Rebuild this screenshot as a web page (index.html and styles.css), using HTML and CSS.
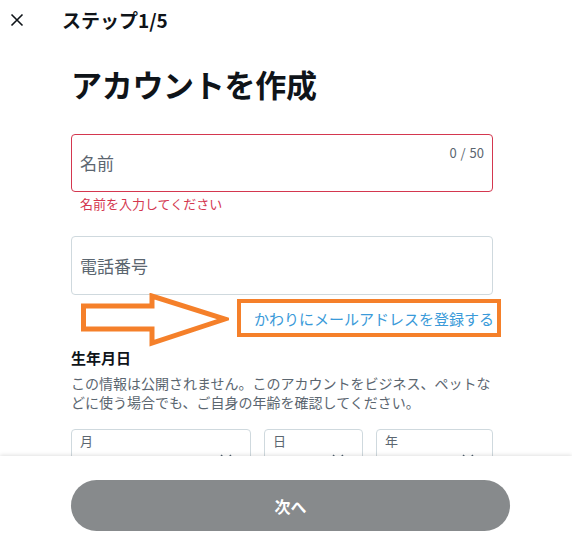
FILE: index.html
```html
<!DOCTYPE html>
<html lang="ja">
<head>
    <meta charset="utf-8">
    <title>アカウントを作成</title>
    <link rel="stylesheet" href="styles.css">
</head>
<body>
    <div class="page">
        <main class="main">
            <header class="topbar">
                <svg class="close-icon" width="14" height="14" viewBox="0 0 14 14">
                    <path d="M1.5 1.5 L12.5 12.5 M12.5 1.5 L1.5 12.5" stroke="#0f1419" stroke-width="1.6" fill="none"/>
                </svg>
                <span class="step">ステップ1/5</span>
            </header>

            <div class="content">
                <h1 class="title">アカウントを作成</h1>

                <div class="field field-error">
                    <span class="placeholder">名前</span>
                    <span class="counter">0 / 50</span>
                </div>
                <div class="error-text">名前を入力してください</div>

                <div class="field field-phone">
                    <span class="placeholder">電話番号</span>
                </div>

                <div class="link-row">
                    <svg class="arrow" width="148" height="54" viewBox="0 0 148 54">
                        <polygon points="2.5,13 71,13 71,3 144,26 71,50 71,36 2.5,36" fill="none" stroke="#f5802a" stroke-width="5" stroke-linejoin="miter"/>
                    </svg>
                    <div class="link-box">
                        <a class="alt-link" href="#">かわりにメールアドレスを登録する</a>
                    </div>
                </div>

                <h2 class="dob-title">生年月日</h2>
                <p class="dob-text">この情報は公開されません。このアカウントをビジネス、ペットなどに使う場合でも、ご自身の年齢を確認してください。</p>

                <div class="dob-row">
                    <div class="select select-month">
                        <span class="select-label">月</span>
                        <svg class="chevron" width="12" height="12" viewBox="0 0 12 12"><path d="M1 3 L6 8 L11 3" stroke="#536471" stroke-width="1.4" fill="none"/></svg>
                    </div>
                    <div class="select select-day">
                        <span class="select-label">日</span>
                        <svg class="chevron" width="12" height="12" viewBox="0 0 12 12"><path d="M1 3 L6 8 L11 3" stroke="#536471" stroke-width="1.4" fill="none"/></svg>
                    </div>
                    <div class="select select-year">
                        <span class="select-label">年</span>
                        <svg class="chevron" width="12" height="12" viewBox="0 0 12 12"><path d="M1 3 L6 8 L11 3" stroke="#536471" stroke-width="1.4" fill="none"/></svg>
                    </div>
                </div>
            </div>
        </main>

        <footer class="footer">
            <button class="next-btn" type="button">次へ</button>
        </footer>
    </div>
</body>
</html>
```

FILE: styles.css
```css
body { margin: 0; font-family: "Noto Sans CJK JP", "Noto Sans", sans-serif; background: #fff; color: #0f1419; }
.page { width: 572px; height: 542px; display: flex; flex-direction: column; overflow: hidden; }
.main { height: 456px; overflow: hidden; flex-shrink: 0; }

.topbar { height: 40px; display: flex; align-items: center; }
.close-icon { margin-left: 10px; margin-top: -1px; }
.step { margin-left: 38px; font-size: 19px; font-weight: 700; line-height: 24px; }

.content { padding-left: 71px; width: 422px; }
.title { margin: 24px 0 0; font-size: 31px; line-height: 40px; font-weight: 700; letter-spacing: -0.3px; }

.field { box-sizing: border-box; height: 58px; border: 1px solid #cfd9de; border-radius: 4px; display: flex; align-items: center; justify-content: space-between; padding: 0 8px; }
.field-error { margin-top: 30px; border-color: #d4374f; }
.field-phone { margin-top: 24px; height: 59px; }
.placeholder { font-size: 17px; color: #5b6670; line-height: 22px; }
.counter { align-self: flex-start; margin-top: 10px; font-size: 13px; color: #5b6670; line-height: 16px; word-spacing: 1px; }
.error-text { margin: 4px 0 0 9px; font-size: 13px; line-height: 16px; color: #d4374f; }

.link-row { display: flex; align-items: flex-start; height: 50px; }
.arrow { margin-left: 10px; margin-top: -2px; flex-shrink: 0; }
.link-box { box-sizing: border-box; flex-shrink: 0; margin-left: 8px; margin-top: 4px; width: 264px; height: 38px; border: 4px solid #f5802a; display: flex; align-items: center; padding-left: 13px; }
.alt-link { font-size: 15px; color: #3a9ad9; text-decoration: none; white-space: nowrap; }

.dob-title { margin: 3px 0 0; font-size: 15px; line-height: 20px; font-weight: 700; }
.dob-text { margin: 6px 0 0; font-size: 14px; line-height: 19px; color: #5b6670; }

.dob-row { display: flex; gap: 13px; margin-top: 17px; }
.select { box-sizing: border-box; height: 58px; border: 1px solid #cfd9de; border-radius: 4px; display: flex; justify-content: space-between; padding: 0 18px 0 8px; }
.select-month { width: 180px; }
.select-day { width: 99px; }
.select-year { width: 117px; }
.select-label { font-size: 13px; color: #5b6670; line-height: 18px; margin-top: 2px; }
.chevron { align-self: center; }

.footer { flex: 1; background: #fff; box-shadow: 0 -1px 4px rgba(0, 0, 0, 0.12); position: relative; padding-top: 24px; }
.next-btn { display: block; margin-left: 71px; width: 439px; height: 51px; border: none; border-radius: 26px; background: #878a8c; color: #fff; font-family: inherit; font-size: 16px; font-weight: 700; cursor: pointer; }
```
